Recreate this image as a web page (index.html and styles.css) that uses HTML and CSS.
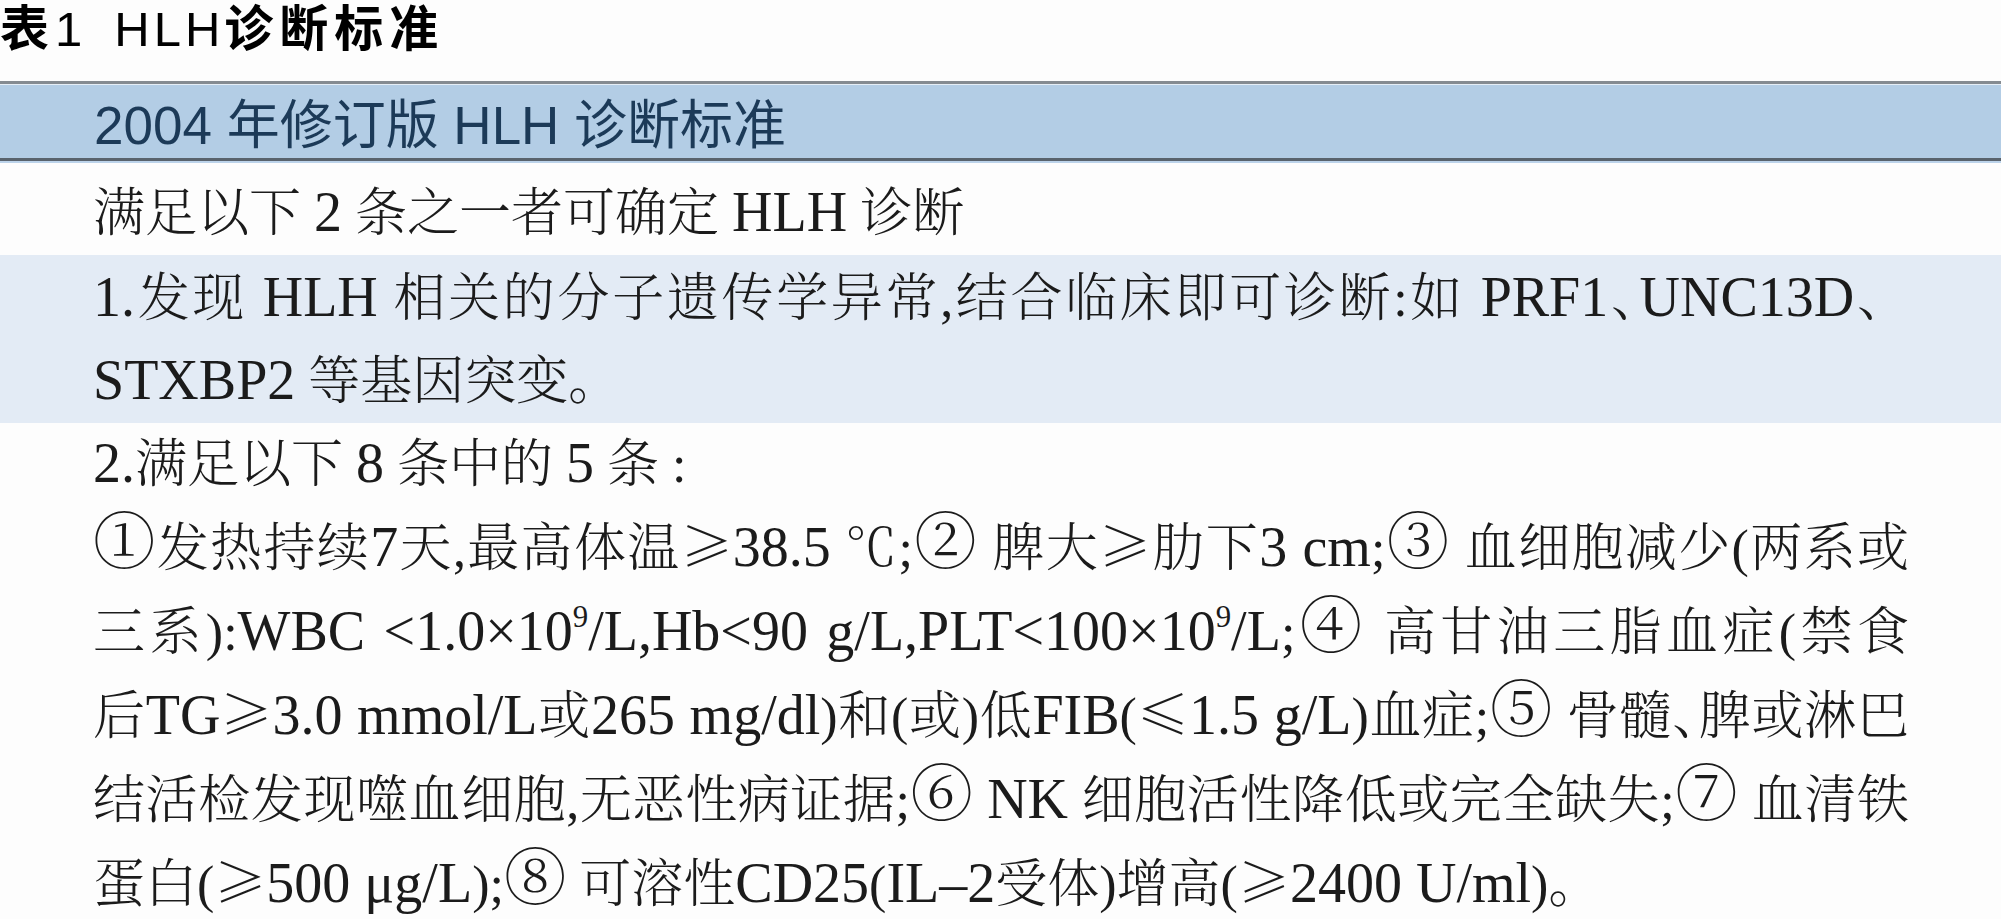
FILE: index.html
```html
<!DOCTYPE html>
<html lang="zh-CN">
<head>
<meta charset="utf-8">
<title>表1 HLH诊断标准</title>
<link rel="stylesheet" href="styles.css">
</head>
<body>
<h1 class="caption"><span class="cap-cj">表</span><span class="cap-num">1</span><span class="cap-lat">HLH</span><span class="cap-cj">诊断标准</span></h1>
<section class="criteria">
  <div class="row row-head">2004 年修订版 HLH 诊断标准</div>
  <div class="row row-intro">
    <p class="ln end">满足以下 <span class="la">2</span> 条之一者可确定 <span class="la">HLH</span> 诊断</p>
  </div>
  <div class="row row-alt">
    <p class="ln"><span class="la">1.</span>发现 <span class="la">HLH</span> 相关的分子遗传学异常,结合临床即可诊断:如 <span class="la">PRF1</span><span class="dun">、</span><span class="la">UNC13D</span>、</p>
    <p class="ln end"><span class="la">STXBP2</span> 等基因突变。</p>
  </div>
  <div class="row row-plain">
    <p class="ln end"><span class="la">2.</span>满足以下 <span class="la">8</span> 条中的 <span class="la">5</span> 条 :</p>
    <p class="ln"><span class="circ">①</span>发热持续<span class="la">7</span>天,最高体温<span class="cj">≥</span><span class="la">38.5</span> ℃;<span class="circ">②</span> 脾大<span class="cj">≥</span>肋下<span class="la">3 cm</span>;<span class="circ">③</span> 血细胞减少(两系或</p>
    <p class="ln">三系):<span class="la">WBC &lt;1.0×10<sup class="sup">9</sup>/L,Hb&lt;90 g/L,PLT&lt;100×10<sup class="sup">9</sup>/L</span>;<span class="circ">④</span> 高甘油三脂血症(禁食</p>
    <p class="ln">后<span class="la">TG</span><span class="cj">≥</span><span class="la">3.0 mmol/L</span>或<span class="la">265 mg/dl</span>)和(或)低<span class="la">FIB</span>(<span class="cj">≤</span><span class="la">1.5 g/L</span>)血症;<span class="circ">⑤</span> 骨髓<span class="dun">、</span>脾或淋巴</p>
    <p class="ln">结活检发现噬血细胞,无恶性病证据;<span class="circ">⑥</span> <span class="la">NK</span> 细胞活性降低或完全缺失;<span class="circ">⑦</span> 血清铁</p>
    <p class="ln end">蛋白(<span class="cj">≥</span><span class="la">500 μg/L</span>);<span class="circ">⑧</span> 可溶性<span class="la">CD25</span>(<span class="la">IL–2</span>受体)增高(<span class="cj">≥</span><span class="la">2400 U/ml</span>)。</p>
  </div>
</section>
</body>
</html>
```

FILE: styles.css
```css
html,
body {
  margin: 0;
  padding: 0;
  background: #fdfdfd;
}

.caption {
  margin: 0 0 23px;
  height: 58px;
  font-family: "Liberation Sans", "Noto Sans CJK SC", sans-serif;
  font-size: 49px;
  font-weight: 700;
  line-height: 58px;
  color: #000;
  white-space: nowrap;
}

.cap-cj {
  letter-spacing: 6px;
}

.cap-num,
.cap-lat {
  font-weight: 400;
}

.cap-lat {
  margin-left: 32px;
  letter-spacing: 4px;
}

.criteria {
  font-family: "Liberation Serif", "Noto Serif CJK SC", "Noto Sans CJK SC", serif;
  font-size: 52px;
  font-weight: 300;
  color: #1b1b1b;
}

.row {
  padding: 0 92px 0 93px;
}

.row-head {
  background: #b3cde5;
  border-top: 3px solid #858b91;
  border-bottom: 3px solid #59636d;
  box-shadow: inset 0 1px 0 #e6eef6;
  padding-top: 10px;
  padding-left: 94px;
  line-height: 64px;
  font-family: "Liberation Sans", "Noto Sans CJK SC", sans-serif;
  font-size: 53px;
  font-weight: 400;
  color: #1c3a58;
  white-space: nowrap;
}

.row-intro {
  border-top: 2px solid #bcd3ea;
  padding-top: 11px;
  padding-bottom: 1px;
}

.row-alt {
  background: #e3ebf5;
  padding-top: 2px;
}

.row-plain {
  padding-top: 0;
}

.ln {
  margin: 0;
  text-align: justify;
  text-align-last: justify;
}

.ln.end {
  text-align-last: left;
}

.row-intro .ln {
  line-height: 80px;
}

.row-alt .ln {
  line-height: 83px;
}

.row-plain .ln {
  line-height: 84px;
}

.la {
  font-size: 56px;
  line-height: 0;
}

.cj {
  font-family: "Noto Serif CJK SC", "Noto Sans CJK SC", serif;
  font-feature-settings: "palt";
  line-height: 0;
}

.dun {
  font-feature-settings: "halt";
}

.circ {
  font-family: "Noto Serif CJK SC", "Noto Sans CJK SC", serif;
  font-size: 1.2em;
  line-height: 0;
  vertical-align: 0.03em;
}

.sup {
  font-size: 0.55em;
  line-height: 0;
  vertical-align: 0.75em;
}
```
